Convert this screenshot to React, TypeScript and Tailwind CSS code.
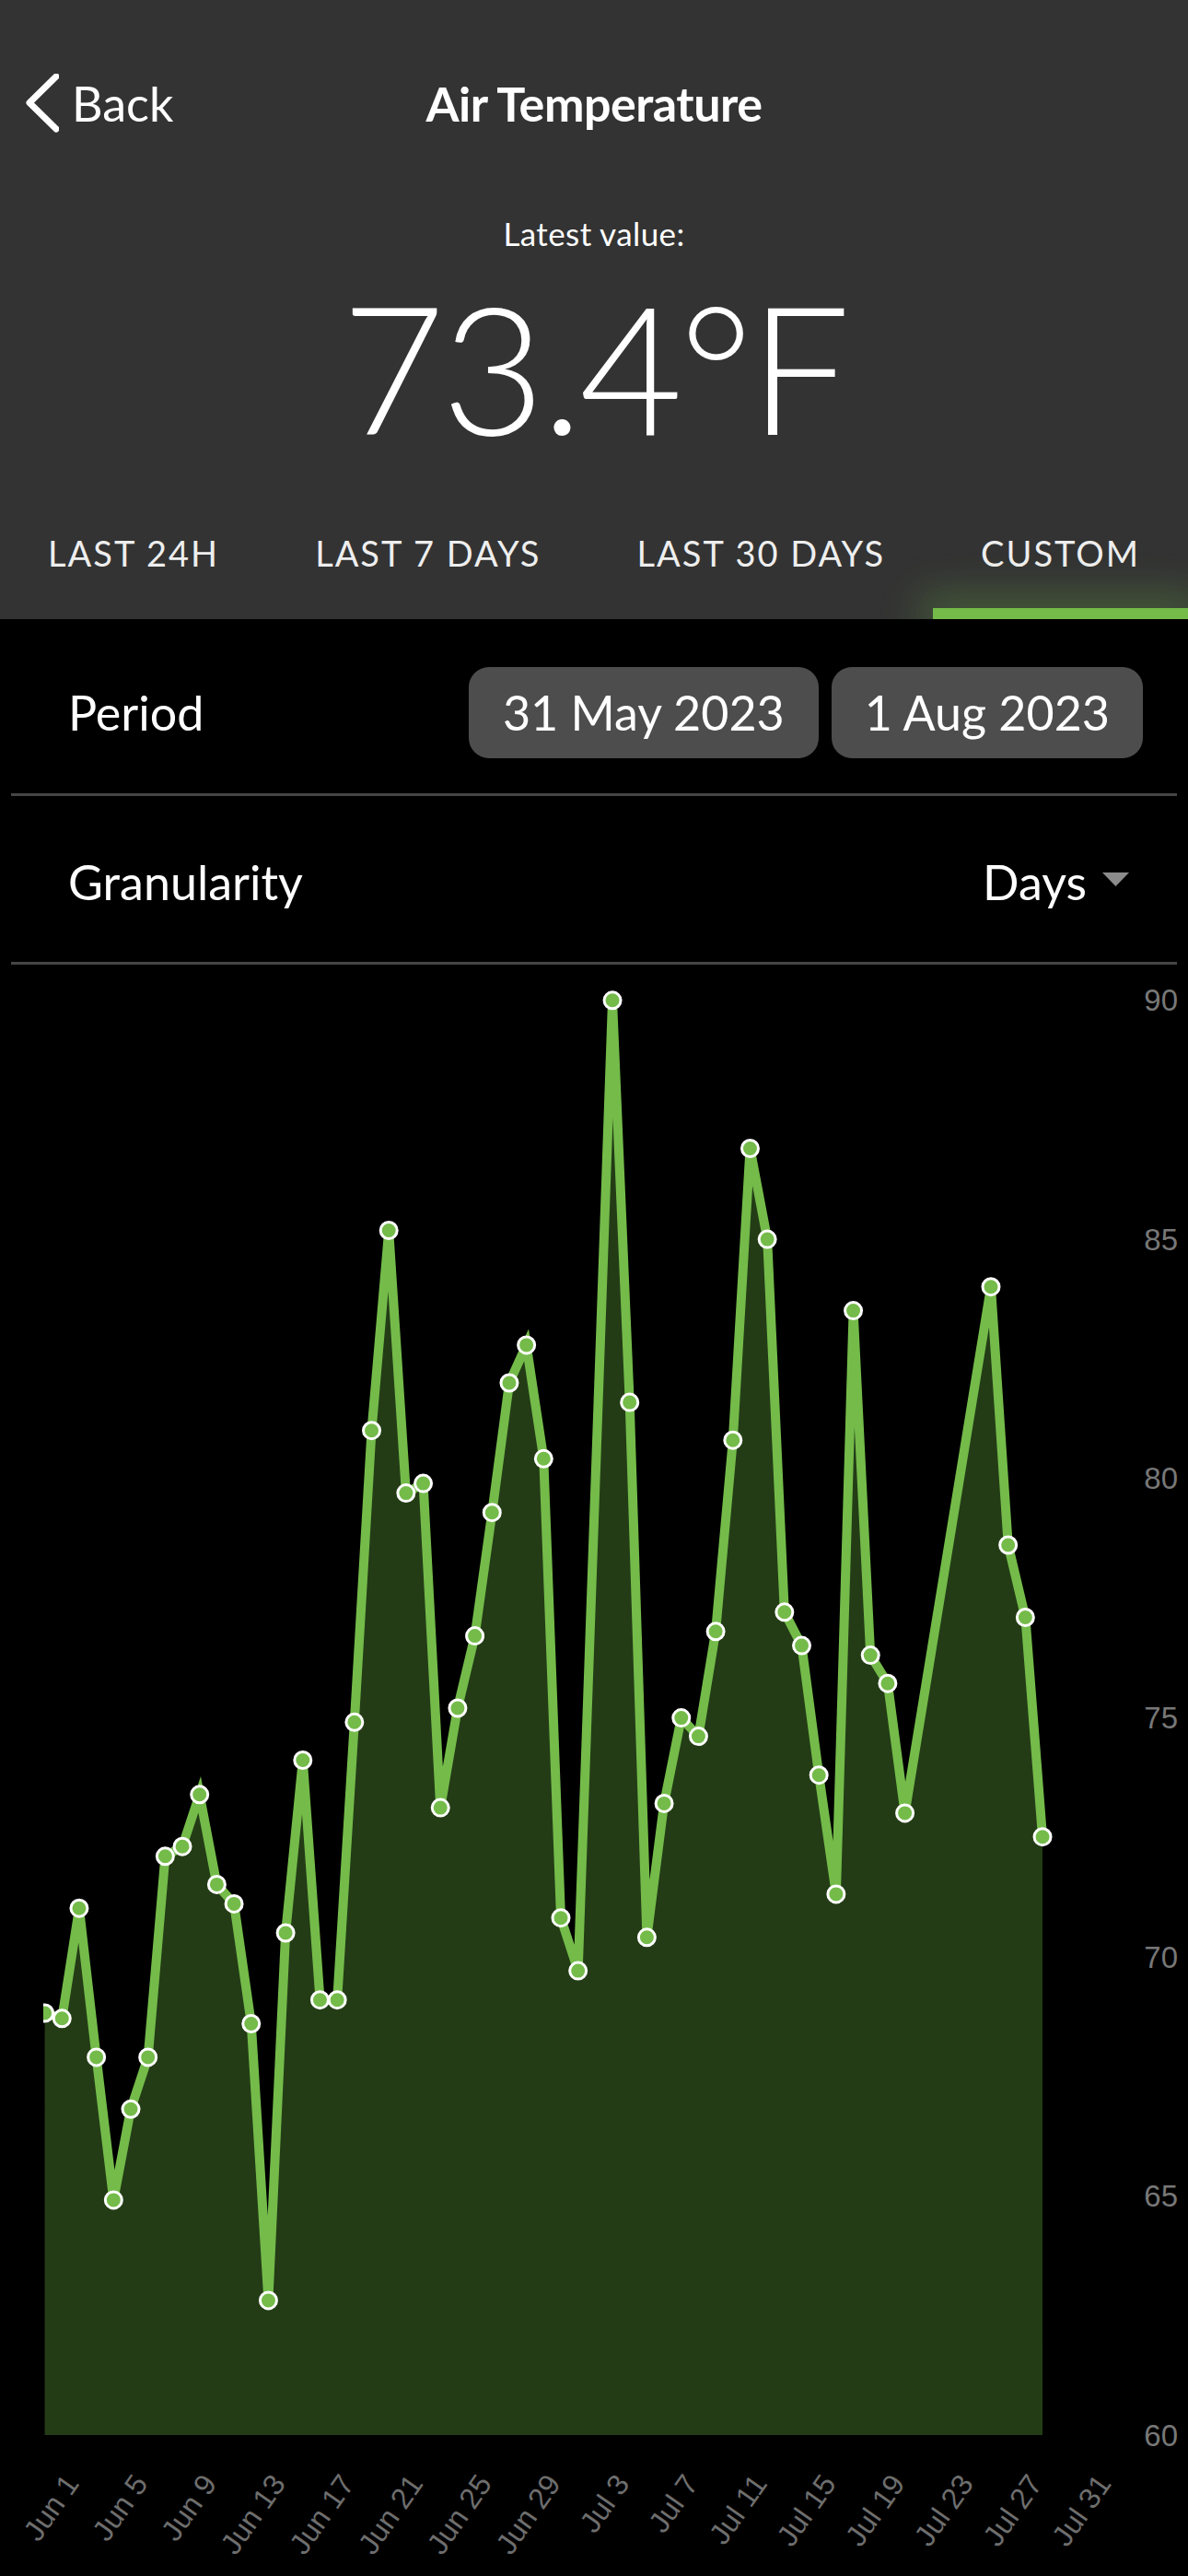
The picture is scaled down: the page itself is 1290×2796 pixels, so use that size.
import React from "react";

const pts: [number, number][] = [
  [0, 2185], [1, 2190.8], [2, 2071.2], [3, 2232.9], [4, 2387.9], [5, 2289.3], [6, 2232.9],
  [7, 2014.8], [8, 2004.2], [9, 1947.8], [10, 2045.4], [11, 2066.4], [12, 2196.5], [13, 2496.9],
  [14, 2098], [15, 1910.5], [16, 2170.7], [17, 2170.7], [18, 1869.3], [19, 1552.7], [20, 1335.5],
  [21, 1620.6], [22, 1610.1], [23, 1962.1], [24, 1854], [25, 1775.6], [26, 1641.7], [27, 1501],
  [28, 1459.9], [29, 1583.3], [30, 2081.7], [31, 2139.1], [33, 1085.8], [34, 1522.1], [35, 2102.8],
  [36, 1957.4], [37, 1864.6], [38, 1884.6], [39, 1770.8], [40, 1563.2], [41, 1246.5], [42, 1345.1],
  [43, 1749.8], [44, 1786.1], [45, 1926.7], [46, 2055.9], [47, 1422.6], [48, 1796.6], [49, 1827.2],
  [50, 1967.9], [55, 1396.7], [56, 1677], [57, 1755.5], [58, 1993.7],
];

const X0 = 48.6;
const DX = 18.68;
const xAt = (i: number) => X0 + i * DX;
const BASE = 2643;
const yAt = (v: number) => BASE - (v - 60) * 51.93;

const xLabels = [
  "Jun 1", "Jun 5", "Jun 9", "Jun 13", "Jun 17", "Jun 21", "Jun 25", "Jun 29",
  "Jul 3", "Jul 7", "Jul 11", "Jul 15", "Jul 19", "Jul 23", "Jul 27", "Jul 31",
];

function Chart() {
  const coords = pts.map(([i, y]) => [xAt(i), y] as [number, number]);
  const line = coords.map(([x, y]) => `${x.toFixed(1)},${y.toFixed(1)}`).join(" ");
  const first = coords[0];
  const last = coords[coords.length - 1];
  const area = `${first[0]},${BASE} ${line} ${last[0]},${BASE}`;
  return (
    <svg width={1290} height={1749} viewBox="0 1047 1290 1749" className="block">
      <defs>
        <clipPath id="plotclip">
          <rect x={47} y={1047} width={1243} height={1749} />
        </clipPath>
      </defs>
      <g clipPath="url(#plotclip)">
        <polygon points={area} fill="#233c16" />
        <polyline
          points={line}
          fill="none"
          stroke="#74bb4a"
          strokeWidth={10}
          strokeLinejoin="miter"
          strokeMiterlimit={4}
        />
        {coords.map(([x, y], k) => (
          <circle key={k} cx={x} cy={y} r={9} fill="#74bb4a" stroke="#ffffff" strokeWidth={3} />
        ))}
      </g>
      {[90, 85, 80, 75, 70, 65, 60].map((v) => (
        <text
          key={v}
          x={1279}
          y={yAt(v) + 12}
          textAnchor="end"
          fontFamily="'Liberation Sans', Arial, sans-serif"
          fontSize={33}
          fill="#777777"
        >
          {v}
        </text>
      ))}
      {xLabels.map((t, k) => {
        const px = xAt(2 + 4 * k) + 1;
        const py = 2696;
        return (
          <text
            key={t}
            x={px}
            y={py}
            textAnchor="end"
            fontFamily="'Liberation Sans', Arial, sans-serif"
            fontSize={32}
            fill="#6e6e6e"
            transform={`rotate(-55 ${px} ${py})`}
          >
            {t}
          </text>
        );
      })}
    </svg>
  );
}

export default function App() {
  const tabs = ["LAST 24H", "LAST 7 DAYS", "LAST 30 DAYS", "CUSTOM"];
  return (
    <div
      className="w-[1290px] min-h-[2796px] bg-black text-white"
      style={{ fontFamily: "Lato, 'Open Sans', sans-serif" }}
    >
      {/* Header */}
      <div className="h-[672px] bg-[#333333] overflow-hidden flex flex-col">
        <div className="mt-[80px] h-[52px] grid grid-cols-[1fr_auto_1fr] items-center">
          <div className="flex items-center pl-[24px] gap-[14px]">
            <svg width="40" height="64" viewBox="0 0 40 64" className="shrink-0">
              <path
                d="M37 3 L8 31.5 L37 60"
                fill="none"
                stroke="#ffffff"
                strokeWidth={7}
                strokeLinecap="round"
                strokeLinejoin="round"
              />
            </svg>
            <span className="text-[52px] leading-none">Back</span>
          </div>
          <div className="text-[52px] leading-none font-bold tracking-[-0.5px]">Air Temperature</div>
          <div />
        </div>
        <div className="mt-[104px] text-center text-[35px] leading-none tracking-[0.4px]">Latest value:</div>
        <div className="mt-[29px] text-center text-[194px] leading-none font-light tracking-[-4px]">73.4°F</div>
        <div className="mt-auto flex">
          {tabs.map((t, i) => (
            <div key={t} className="flex-auto flex flex-col items-center">
              <span className="text-[38px] leading-none tracking-[2px] text-[#eeeeee]">{t}</span>
              <div
                className={
                  i === 3
                    ? "mt-[41px] h-[12px] w-full bg-[#74bb4a] shadow-[0_0_44px_14px_rgba(116,187,74,0.32)]"
                    : "mt-[41px] h-[12px] w-full"
                }
              />
            </div>
          ))}
        </div>
      </div>

      {/* Period */}
      <div className="h-[189px] pt-[13px] pl-[74px] pr-[49px] flex items-center justify-between">
        <span className="text-[52px] leading-none">Period</span>
        <div className="flex gap-[14px]">
          <div className="h-[99px] rounded-[22px] bg-[#4d4d4d] px-[37px] flex items-center text-[52px] leading-none">
            31 May 2023
          </div>
          <div className="h-[99px] rounded-[22px] bg-[#4d4d4d] px-[36px] flex items-center text-[52px] leading-none">
            1 Aug 2023
          </div>
        </div>
      </div>
      <div className="mx-[12px] h-[3px] bg-[#454545]" />

      {/* Granularity */}
      <div className="h-[180px] pt-[5px] pl-[74px] pr-[64px] flex items-center justify-between">
        <span className="text-[52px] leading-none">Granularity</span>
        <div className="flex items-center gap-[17px]">
          <span className="text-[52px] leading-none">Days</span>
          <svg width="29" height="15" viewBox="0 0 29 15" className="mb-[4px]">
            <polygon points="0,0 29,0 14.5,15" fill="#8c8c8c" />
          </svg>
        </div>
      </div>
      <div className="mx-[12px] h-[3px] bg-[#454545]" />

      <Chart />
    </div>
  );
}
